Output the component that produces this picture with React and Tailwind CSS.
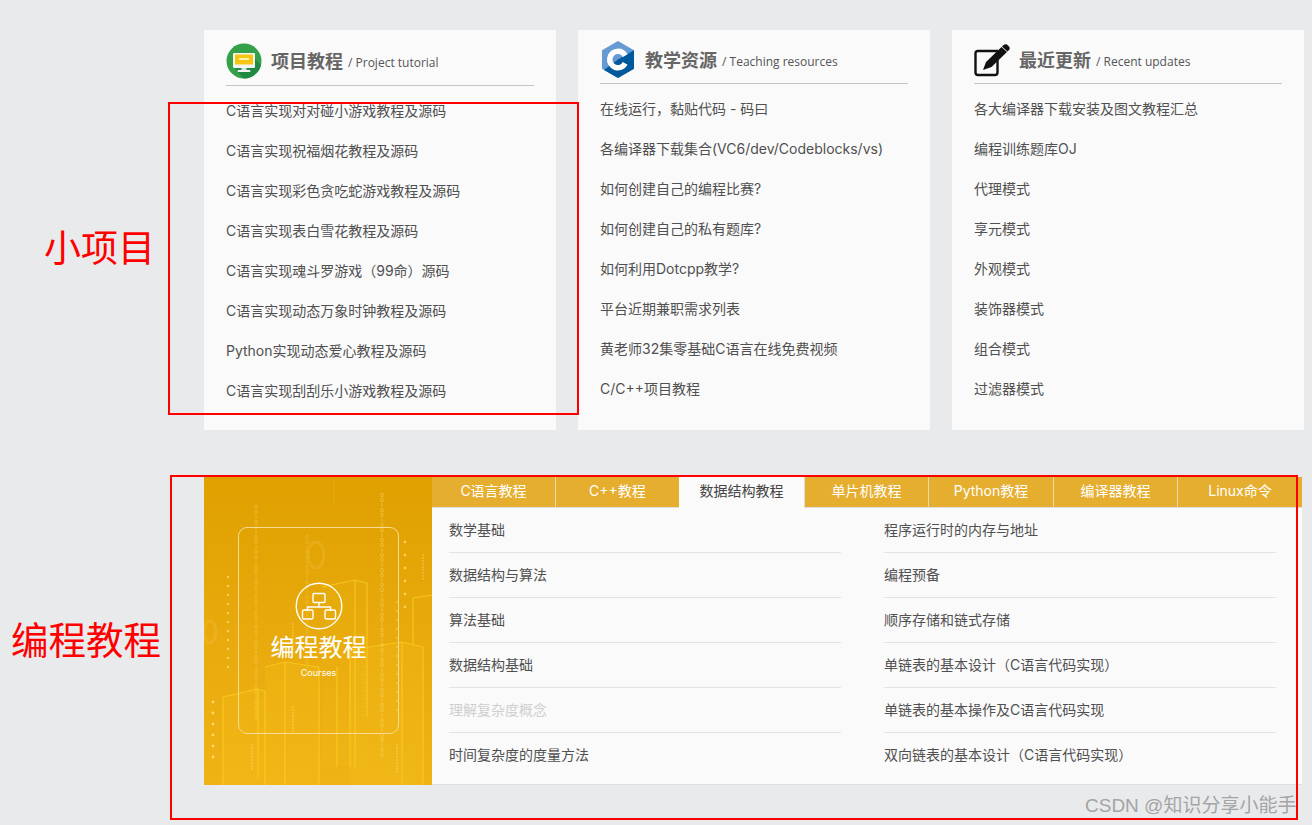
const SANS = "font-['Inter','Noto_Sans_CJK_SC',sans-serif]";
const SERIF = "font-['Liberation_Serif','Noto_Sans_CJK_SC',serif]";

const projects = [
  "C语言实现对对碰小游戏教程及源码",
  "C语言实现祝福烟花教程及源码",
  "C语言实现彩色贪吃蛇游戏教程及源码",
  "C语言实现表白雪花教程及源码",
  "C语言实现魂斗罗游戏（99命）源码",
  "C语言实现动态万象时钟教程及源码",
  "Python实现动态爱心教程及源码",
  "C语言实现刮刮乐小游戏教程及源码",
];
const resources = [
  "在线运行，黏贴代码 - 码曰",
  "各编译器下载集合(VC6/dev/Codeblocks/vs)",
  "如何创建自己的编程比赛?",
  "如何创建自己的私有题库?",
  "如何利用Dotcpp教学?",
  "平台近期兼职需求列表",
  "黄老师32集零基础C语言在线免费视频",
  "C/C++项目教程",
];
const updates = [
  "各大编译器下载安装及图文教程汇总",
  "编程训练题库OJ",
  "代理模式",
  "享元模式",
  "外观模式",
  "装饰器模式",
  "组合模式",
  "过滤器模式",
];
const tabs = ["C语言教程", "C++教程", "数据结构教程", "单片机教程", "Python教程", "编译器教程", "Linux命令"];
const leftRows = ["数学基础", "数据结构与算法", "算法基础", "数据结构基础", "理解复杂度概念", "时间复杂度的度量方法"];
const rightRows = [
  "程序运行时的内存与地址",
  "编程预备",
  "顺序存储和链式存储",
  "单链表的基本设计（C语言代码实现）",
  "单链表的基本操作及C语言代码实现",
  "双向链表的基本设计（C语言代码实现）",
];

function MonitorIcon() {
  return (
    <svg width="36" height="38" viewBox="0 0 36 38">
      <circle cx="18" cy="19" r="17.5" fill="#35a04a" />
      <path d="M9 27 L18 36.5 C26 36.5 33 31 35 23 L28 16 Z" fill="#1f8a44" />
      <rect x="7" y="11" width="22" height="15" rx="1" fill="#f4f4f4" />
      <rect x="9" y="12.5" width="18" height="10" fill="#f9c513" />
      <rect x="15.5" y="26" width="5" height="2.5" fill="#ddd" />
      <rect x="11.5" y="28" width="13" height="2" rx="1" fill="#f4f4f4" />
      <rect x="13" y="16" width="10" height="2" fill="#fff3b0" />
    </svg>
  );
}

function CIcon() {
  return (
    <svg width="32" height="37" viewBox="0 0 32 37" className="ml-[2px]">
      <path d="M16 0 L32 9.2 V27.8 L16 37 L0 27.8 V9.2 Z" fill="#659ad2" />
      <path d="M16 18.5 L32 9.2 V27.8 L16 37 L2 29 Z" fill="#00599c" />
      <path d="M16 7.5 A11 11 0 1 0 25.6 23.8 L20.8 21 A5.5 5.5 0 1 1 20.8 16 L25.6 13.2 A11 11 0 0 0 16 7.5 Z" fill="#fff" />
    </svg>
  );
}

function EditIcon() {
  return (
    <svg width="37" height="34" viewBox="0 0 37 34">
      <path d="M24 8 H4 Q1.5 8 1.5 10.5 V29.5 Q1.5 32 4 32 H21 Q23.5 32 23.5 29.5 V17" fill="none" stroke="#111" strokeWidth="2.4" />
      <path d="M9 27 L12 19 L27.5 4 L33 9 L17.5 24 Z" fill="#111" />
      <path d="M29 2.5 Q31 0.5 33 1.5 L35.5 4 Q36.5 6 34.5 7.5 L33.5 8.5 L28 3.5 Z" fill="#111" />
    </svg>
  );
}

function Card({ icon, title, sub, items, headClass }) {
  return (
    <div className="bg-[#fafafa] h-[400px] px-[22px]">
      <div className={`flex items-center border-b border-[#c4c4c4] ${headClass}`}>
        <div className="w-[45px] shrink-0">{icon}</div>
        <span className="text-[18px] leading-6 font-bold text-[#666] mt-[2px]">{title}</span>
        <span className="text-[12px] leading-6 text-[#555] ml-[5px] mt-[4px] font-['Open_Sans',sans-serif]">/ {sub}</span>
      </div>
      <ul className="pt-[5px]">
        {items.map((t) => (
          <li key={t} className="h-10 leading-10 text-[14px] text-[#505050] whitespace-nowrap">{t}</li>
        ))}
      </ul>
    </div>
  );
}

function Digits({ x, from, to, step = 5, r = 1.4, op = 0.45 }) {
  const ys = [];
  for (let y = from; y <= to; y += step) ys.push(y);
  return ys.map((y, i) =>
    i % 3 === 2 ? (
      <rect key={y} x={x - 0.4} y={y - 1.8} width="0.9" height="3.6" fill="#ffe27a" opacity={op} />
    ) : (
      <ellipse key={y} cx={x} cy={y} rx={r} ry={r + 0.4} fill="none" stroke="#ffe27a" strokeWidth="0.8" opacity={op} />
    ),
  );
}

function Dots({ x, from, to, step = 3, r = 0.8, op = 0.7 }) {
  const ys = [];
  for (let y = from; y <= to; y += step) ys.push(y);
  return ys.map((y) => <circle key={y} cx={x} cy={y} r={r} fill="#ffe27a" opacity={op} />);
}

function Building({ d, lines, bottom = 308 }) {
  return (
    <g fill="none" stroke="#fbd020" strokeWidth="1.2" opacity="0.75">
      <path d={d} />
      {lines.map((l) => <path key={l[0]} d={`M${l[0]} ${l[1]} V${l[2] || bottom}`} />)}
    </g>
  );
}

function PanelBackdrop() {
  return (
    <svg className="absolute inset-0" width="228" height="308" viewBox="0 0 228 308">
      <path d="M146 173 L198 165 L219 170 V308 H146 Z" fill="#f8c61a" opacity="0.22" />
      <path d="M61 190 L81 185 L115 190 V308 H61 Z" fill="#f8c61a" opacity="0.2" />
      <path d="M19 220 L54 212 L61 214 V308 H19 Z" fill="#f8c61a" opacity="0.18" />
      <path d="M118 110 L151 103 L163 106 V290 H118 Z" fill="#f8c61a" opacity="0.1" />
      <Building d="M19 220 L54 212 L61 214" lines={[[19, 220], [54, 212, 301], [61, 214]]} />
      <Building d="M61 190 L81 185 L115 190" lines={[[81, 185], [115, 190]]} />
      <Building d="M118 110 L151 103 L163 106" lines={[[151, 103, 290], [163, 106, 240], [133, 190, 290]]} />
      <Building d="M146 173 L198 165 L219 170" lines={[[146, 173, 290], [198, 165], [219, 170]]} />
      <Building d="M209 121 L228 118" lines={[[209, 121, 168]]} />
      <Digits x={52} from={30} to={240} op={0.4} />
      <Digits x={178} from={18} to={280} op={0.5} />
      <Digits x={103} from={60} to={190} op={0.3} />
      <Dots x={24} from={100} to={195} step={9} r={1.2} />
      <Dots x={9} from={225} to={290} step={11} r={1.4} op={0.85} />
      <Dots x={201} from={65} to={135} step={13} r={1.4} />
      <Dots x={193} from={125} to={240} step={9} r={1} op={0.45} />
      <Dots x={219} from={78} to={102} />
      <Dots x={48} from={268} to={293} />
      <Dots x={89} from={147} to={172} />
      <Dots x={89} from={230} to={255} />
      <Dots x={193} from={268} to={295} />
      <Dots x={130} from={5} to={28} r={0.7} op={0.35} />
      <Dots x={160} from={190} to={240} step={4} op={0.35} />
      <ellipse cx="112" cy="78" rx="8" ry="13" fill="none" stroke="#f6cf60" strokeWidth="3" opacity="0.22" />
      <ellipse cx="6" cy="155" rx="6" ry="11" fill="none" stroke="#f6cf60" strokeWidth="3" opacity="0.22" />
    </svg>
  );
}

function NetworkIcon() {
  return (
    <svg width="48" height="48" viewBox="0 0 48 48" fill="none" stroke="#fff">
      <circle cx="24" cy="24" r="22.8" strokeWidth="1.4" />
      <rect x="18" y="11.5" width="12" height="9" rx="1" strokeWidth="1.4" />
      <path d="M24 20.5 V25 M12.5 29 V25 H35.5 V29" strokeWidth="1.4" />
      <rect x="7.5" y="28" width="10.5" height="9" rx="1.5" strokeWidth="1.4" />
      <rect x="30" y="28" width="10.5" height="9" rx="1.5" strokeWidth="1.4" />
    </svg>
  );
}

function Row({ text, last }) {
  const faded = text === "理解复杂度概念";
  return (
    <li className={`h-[45px] leading-[44px] text-[14px] whitespace-nowrap ${faded ? "text-[#cfcfcf]" : "text-[#505050]"} ${last ? "" : "border-b border-[#e3e3e3]"}`}>
      {text}
    </li>
  );
}

export default function App() {
  return (
    <div className={`relative w-[1312px] h-[825px] overflow-hidden bg-[#e9eaec] pl-[204px] pt-[30px] ${SANS}`}>
      <div className="grid grid-cols-[352px_352px_352px] gap-[22px]">
        <Card icon={<MonitorIcon />} title="项目教程" sub="Project tutorial" items={projects} headClass="pt-[12px] pb-[5px]" />
        <Card icon={<CIcon />} title="教学资源" sub="Teaching resources" items={resources} headClass="pt-[11px] pb-[5px]" />
        <Card icon={<EditIcon />} title="最近更新" sub="Recent updates" items={updates} headClass="pt-[13px] pb-[6px]" />
      </div>

      <div className="flex mt-[47px] h-[308px] w-[1098px]">
        <div className="relative w-[228px] shrink-0 bg-gradient-to-b from-[#dfa000] to-[#f0b316] overflow-hidden">
          <PanelBackdrop />
          <div className="absolute left-[34px] top-[50px] w-[161px] h-[207px] rounded-[9px] border border-[#f5dc96] flex flex-col items-center pt-[54px] text-white">
            <NetworkIcon />
            <span className="text-[24px] leading-[32px] mt-[2px]">编程教程</span>
            <span className="text-[9px] leading-3 mt-[3px]">Courses</span>
          </div>
        </div>
        <div className="flex-1 flex flex-col bg-[#fafafa] border-b border-[#dedede]">
          <div className="grid grid-cols-[124px_123px_126px_124px_125px_124px_124px] h-[31px] bg-[#e6ae2f] border-b border-[#dedede]">
            {tabs.map((t, i) => (
              <div
                key={t}
                className={
                  i === 2
                    ? "h-[31px] bg-[#fafafa] text-[#444] text-[14px] leading-[28px] text-center whitespace-nowrap border-r border-[#dedede]"
                    : `text-white text-[14px] leading-[28px] text-center whitespace-nowrap ${i === 6 || i === 1 ? "" : "border-r border-[#ecd9a8]"}`
                }
              >
                {t}
              </div>
            ))}
          </div>
          <div className="grid grid-cols-[392px_392px] gap-x-[43px] pl-[17px]">
            <ul>{leftRows.map((t, i) => <Row key={t} text={t} last={i === 5} />)}</ul>
            <ul>{rightRows.map((t, i) => <Row key={t} text={t} last={i === 5} />)}</ul>
          </div>
        </div>
      </div>

      {/* annotations on top of the screenshot */}
      <div className="absolute left-[168px] top-[102px] w-[411px] h-[313px] border-2 border-[#f00] pointer-events-none" />
      <div className="absolute left-[170px] top-[475px] w-[1128px] h-[345px] border-2 border-[#f00] pointer-events-none" />
      <span className={`absolute left-[44px] top-[227px] text-[37px] leading-[46px] text-[#f00] ${SERIF}`}>小项目</span>
      <span className={`absolute left-[11px] top-[618px] text-[37.5px] leading-[48px] text-[#f00] ${SERIF}`}>编程教程</span>
      <span className="absolute left-[1085px] top-[794px] text-[19px] leading-6 text-[#a4a4a4] whitespace-nowrap font-['Liberation_Sans','Noto_Sans_CJK_SC',sans-serif]">CSDN @知识分享小能手</span>
    </div>
  );
}
